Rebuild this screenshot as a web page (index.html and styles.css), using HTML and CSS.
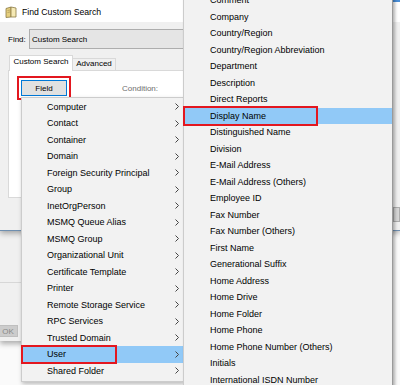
FILE: index.html
```html
<!DOCTYPE html>
<html lang="en">
<head>
    <meta charset="UTF-8">
    <meta name="viewport" content="width=device-width, initial-scale=1.0">
    <title>Find Custom Search</title>
    <link rel="stylesheet" href="styles.css">
</head>
<body>
    <div class="dialog">
        <div class="titlebar">
            <svg class="title-icon" width="12" height="12" viewBox="0 0 12 12">
                <path d="M1 2.5 L6 1 L6 11 L1 11.5 Z" fill="#e6cf7e" stroke="#8a7a45" stroke-width="0.8"/>
                <path d="M6 1 L11 2 L11 11 L6 11 Z" fill="#f5e9b4" stroke="#8a7a45" stroke-width="0.8"/>
                <path d="M2.5 4.5 L5 4 M2.5 6.5 L5 6" stroke="#9c8a50" stroke-width="0.6"/>
            </svg>
            <span class="title">Find Custom Search</span>
            <span class="title-corner"></span>
        </div>

        <div class="dialog-body">
            <div class="find-row">
                <label>Find:</label>
                <div class="combo">Custom Search</div>
            </div>

            <div class="tabs">
                <div class="tab active">Custom Search</div>
                <div class="tab">Advanced</div>
            </div>

            <div class="tab-panel">
                <div class="field-row">
                    <button type="button" class="field-btn">Field</button>
                    <span class="condition">Condition:</span>
                </div>
            </div>

            <div class="dialog-footer">
                <span class="edge-btn"></span>
            </div>
        </div>
    </div>

    <div class="parent-window">
        <div class="parent-rule"></div>
        <button type="button" class="ok-btn">OK</button>
    </div>

    <!-- object type menu -->
    <div class="menu menu-main">
        <div class="menu-item">Computer<svg class="arrow" width="4" height="7" viewBox="0 0 4 7"><path d="M0.5 0.5 L3.5 3.5 L0.5 6.5" fill="none" stroke="#444" stroke-width="1"/></svg></div>
        <div class="menu-item">Contact<svg class="arrow" width="4" height="7" viewBox="0 0 4 7"><path d="M0.5 0.5 L3.5 3.5 L0.5 6.5" fill="none" stroke="#444" stroke-width="1"/></svg></div>
        <div class="menu-item">Container<svg class="arrow" width="4" height="7" viewBox="0 0 4 7"><path d="M0.5 0.5 L3.5 3.5 L0.5 6.5" fill="none" stroke="#444" stroke-width="1"/></svg></div>
        <div class="menu-item">Domain<svg class="arrow" width="4" height="7" viewBox="0 0 4 7"><path d="M0.5 0.5 L3.5 3.5 L0.5 6.5" fill="none" stroke="#444" stroke-width="1"/></svg></div>
        <div class="menu-item">Foreign Security Principal<svg class="arrow" width="4" height="7" viewBox="0 0 4 7"><path d="M0.5 0.5 L3.5 3.5 L0.5 6.5" fill="none" stroke="#444" stroke-width="1"/></svg></div>
        <div class="menu-item">Group<svg class="arrow" width="4" height="7" viewBox="0 0 4 7"><path d="M0.5 0.5 L3.5 3.5 L0.5 6.5" fill="none" stroke="#444" stroke-width="1"/></svg></div>
        <div class="menu-item">InetOrgPerson<svg class="arrow" width="4" height="7" viewBox="0 0 4 7"><path d="M0.5 0.5 L3.5 3.5 L0.5 6.5" fill="none" stroke="#444" stroke-width="1"/></svg></div>
        <div class="menu-item">MSMQ Queue Alias<svg class="arrow" width="4" height="7" viewBox="0 0 4 7"><path d="M0.5 0.5 L3.5 3.5 L0.5 6.5" fill="none" stroke="#444" stroke-width="1"/></svg></div>
        <div class="menu-item">MSMQ Group<svg class="arrow" width="4" height="7" viewBox="0 0 4 7"><path d="M0.5 0.5 L3.5 3.5 L0.5 6.5" fill="none" stroke="#444" stroke-width="1"/></svg></div>
        <div class="menu-item">Organizational Unit<svg class="arrow" width="4" height="7" viewBox="0 0 4 7"><path d="M0.5 0.5 L3.5 3.5 L0.5 6.5" fill="none" stroke="#444" stroke-width="1"/></svg></div>
        <div class="menu-item">Certificate Template<svg class="arrow" width="4" height="7" viewBox="0 0 4 7"><path d="M0.5 0.5 L3.5 3.5 L0.5 6.5" fill="none" stroke="#444" stroke-width="1"/></svg></div>
        <div class="menu-item">Printer<svg class="arrow" width="4" height="7" viewBox="0 0 4 7"><path d="M0.5 0.5 L3.5 3.5 L0.5 6.5" fill="none" stroke="#444" stroke-width="1"/></svg></div>
        <div class="menu-item">Remote Storage Service<svg class="arrow" width="4" height="7" viewBox="0 0 4 7"><path d="M0.5 0.5 L3.5 3.5 L0.5 6.5" fill="none" stroke="#444" stroke-width="1"/></svg></div>
        <div class="menu-item">RPC Services<svg class="arrow" width="4" height="7" viewBox="0 0 4 7"><path d="M0.5 0.5 L3.5 3.5 L0.5 6.5" fill="none" stroke="#444" stroke-width="1"/></svg></div>
        <div class="menu-item">Trusted Domain<svg class="arrow" width="4" height="7" viewBox="0 0 4 7"><path d="M0.5 0.5 L3.5 3.5 L0.5 6.5" fill="none" stroke="#444" stroke-width="1"/></svg></div>
        <div class="menu-item active">User<svg class="arrow" width="4" height="7" viewBox="0 0 4 7"><path d="M0.5 0.5 L3.5 3.5 L0.5 6.5" fill="none" stroke="#444" stroke-width="1"/></svg><span class="callout callout-user"></span></div>
        <div class="menu-item">Shared Folder<svg class="arrow" width="4" height="7" viewBox="0 0 4 7"><path d="M0.5 0.5 L3.5 3.5 L0.5 6.5" fill="none" stroke="#444" stroke-width="1"/></svg></div>
    </div>

    <!-- User attributes submenu -->
    <div class="menu menu-sub">
        <div class="menu-item">Comment</div>
        <div class="menu-item">Company</div>
        <div class="menu-item">Country/Region</div>
        <div class="menu-item">Country/Region Abbreviation</div>
        <div class="menu-item">Department</div>
        <div class="menu-item">Description</div>
        <div class="menu-item">Direct Reports</div>
        <div class="menu-item active">Display Name<span class="callout callout-name"></span></div>
        <div class="menu-item">Distinguished Name</div>
        <div class="menu-item">Division</div>
        <div class="menu-item">E-Mail Address</div>
        <div class="menu-item">E-Mail Address (Others)</div>
        <div class="menu-item">Employee ID</div>
        <div class="menu-item">Fax Number</div>
        <div class="menu-item">Fax Number (Others)</div>
        <div class="menu-item">First Name</div>
        <div class="menu-item">Generational Suffix</div>
        <div class="menu-item">Home Address</div>
        <div class="menu-item">Home Drive</div>
        <div class="menu-item">Home Folder</div>
        <div class="menu-item">Home Phone</div>
        <div class="menu-item">Home Phone Number (Others)</div>
        <div class="menu-item">Initials</div>
        <div class="menu-item">International ISDN Number</div>
    </div>
</body>
</html>
```

FILE: styles.css
```css
* {
    box-sizing: border-box;
    margin: 0;
    padding: 0;
}

body {
    width: 400px;
    height: 385px;
    overflow: hidden;
    position: relative;
    background: #fafafa;
    font-family: "Liberation Sans", Arial, sans-serif;
    font-size: 8px;
    color: #000;
}

/* dialog window */
.dialog {
    position: relative;
    z-index: 2;
    height: 231px;
    background: #f0f0f0;
    border-bottom: 1px solid #6f8fb0;
    box-shadow: 0 2px 6px rgba(0, 0, 0, 0.35);
}

.titlebar {
    height: 22px;
    background: #fff;
    display: flex;
    align-items: center;
    padding: 1px 0 0 5px;
}

.title-icon {
    flex: none;
}

.title {
    margin-left: 5px;
    font-size: 8.7px;
}

.title-corner {
    margin-left: auto;
    align-self: flex-start;
    margin-top: -1px;
    width: 7px;
    height: 2px;
    background: #4a8fd8;
}

.dialog-body {
    padding-left: 8px;
}

.find-row {
    display: flex;
    align-items: center;
    margin-top: 7px;
    height: 20px;
}

.find-row label {
    width: 21px;
}

.combo {
    width: 360px;
    height: 20px;
    background: #e5e5e5;
    border: 1px solid #adadad;
    display: flex;
    align-items: center;
    padding-left: 2px;
}

.tabs {
    display: flex;
    align-items: flex-end;
    margin-top: 6px;
    margin-bottom: -1px;
    padding-left: 1px;
    position: relative;
    z-index: 1;
}

.tab {
    width: 43px;
    height: 13px;
    border: 1px solid #d9d9d9;
    border-left: none;
    background: #f0f0f0;
    text-align: center;
    line-height: 9px;
}

.tab.active {
    width: 64px;
    height: 16px;
    background: #fff;
    border-left: 1px solid #d9d9d9;
    border-bottom: none;
    line-height: 12px;
}

.tab-panel {
    width: 377px;
    height: 128px;
    background: #fff;
    border: 1px solid #d9d9d9;
    padding: 9px 0 0 12px;
}

.field-row {
    display: flex;
    align-items: center;
}

.field-btn {
    width: 46px;
    height: 16px;
    background: #e1e1e1;
    border: 1px solid #0078d7;
    font: inherit;
    color: #000;
    outline: 2px solid #e3171f;
    outline-offset: 2px;
}

.condition {
    margin-left: 55px;
    color: #6d6d6d;
}

.dialog-footer {
    display: flex;
    padding: 9px 0 0 385px;
}

.edge-btn {
    width: 20px;
    height: 15px;
    background: #d6d6d6;
    border: 1px solid #adadad;
}

/* window behind the dialog */
.parent-window {
    position: relative;
    z-index: 1;
    width: 160px;
    height: 110px;
    background: #f0f0f0;
    padding-top: 51px;
    box-shadow: 0 3px 5px rgba(0, 0, 0, 0.3);
}

.parent-rule {
    height: 1px;
    background: #d7d7d7;
}

.ok-btn {
    display: block;
    margin: 42px 0 0 -2px;
    width: 20px;
    height: 12px;
    background: #cccccc;
    border: 1px solid #bfbfbf;
    color: #8a8a8a;
    font: inherit;
}

/* context menus */
.menu {
    position: absolute;
    background: #f2f2f2;
    border: 1px solid #cccccc;
    font-size: 9px;
}

.menu-main {
    left: 21px;
    top: 97px;
    width: 163px;
    padding: 0.5px 0 2px;
    z-index: 5;
    box-shadow: 1px 2px 4px rgba(0, 0, 0, 0.25);
}

.menu-sub {
    left: 183px;
    top: -9px;
    bottom: -10px;
    width: 210px;
    z-index: 6;
    border-right-color: #9a9a9a;
    box-shadow: 2px 1px 3px rgba(0, 0, 0, 0.3);
}

.menu-item {
    position: relative;
    height: 16.5px;
    display: flex;
    align-items: center;
    padding-left: 25px;
    white-space: nowrap;
}

.menu-sub .menu-item {
    padding-left: 26px;
}

.menu-item.active {
    background: #91c9f7;
}

.menu-item .arrow {
    margin-left: auto;
    margin-right: 4px;
}

.callout {
    position: absolute;
    border: 2px solid #e3171f;
}

.callout-user {
    left: -1px;
    top: -1px;
    width: 96px;
    height: 18.5px;
}

.callout-name {
    left: -1px;
    top: -1.5px;
    width: 135px;
    height: 20px;
}
```
